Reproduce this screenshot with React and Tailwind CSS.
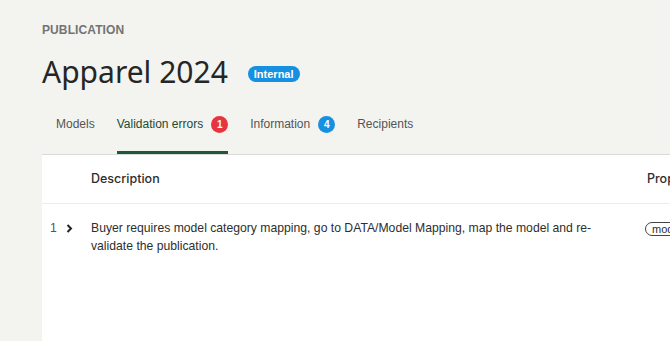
import React from "react";

export default function App() {
  return (
    <div className="h-[341px] w-[670px] overflow-hidden bg-[#f3f3ef] pl-[42px]" style={{ fontFamily: "'Liberation Sans', Arial, sans-serif" }}>
      <div className="pt-[23px] text-[12px] font-semibold uppercase leading-[14px] tracking-[0.1px] text-[#737373]">Publication</div>
      <div className="mt-[18px] flex items-center">
        <h1 className="text-[30px] leading-[34px] text-[#262626]" style={{ fontFamily: "'Noto Sans', sans-serif" }}>Apparel 2024</h1>
        <span className="ml-[20px] mt-[3px] rounded-full bg-[#1690e0] px-[6px] text-[11px] font-bold leading-[16px] text-white">Internal</span>
      </div>
      <div className="mt-[27px] w-[700px] border-b border-[#d9d9d6] pl-[14px]">
        <div className="flex gap-[22px] text-[12px] leading-[16px]">
          <div className="pb-[21px] text-[#555]">Models</div>
          <div className="flex items-start gap-[8px] border-b-[3px] border-[#1e5a3a] pb-[18px] text-[#1d4a33]">
            <span>Validation errors</span>
            <span className="flex h-[17px] w-[17px] items-center justify-center rounded-full bg-[#e8343f] text-[10px] font-bold text-white">1</span>
          </div>
          <div className="flex items-start gap-[8px] pb-[21px] text-[#555]">
            <span>Information</span>
            <span className="flex h-[17px] w-[17px] items-center justify-center rounded-full bg-[#1690e0] text-[10px] font-bold text-white">4</span>
          </div>
          <div className="pb-[21px] text-[#555]">Recipients</div>
        </div>
      </div>
      <div className="h-[200px] w-[700px] bg-white text-[12.2px] text-[#2e2e2e]">
        <div className="flex h-[49px] items-center border-b border-[#ececec] text-[12.5px] font-medium">
          <div className="w-[49px]" />
          <div className="w-[556px]" style={{ fontFamily: "Inter, sans-serif" }}>Description</div>
          <div style={{ fontFamily: "Inter, sans-serif" }}>Prop</div>
        </div>
        <div className="flex pt-[15px]">
          <div className="flex w-[49px] items-start pl-[8px] leading-[18px]">
            <span className="text-[#555]">1</span>
            <svg className="ml-[9px] mt-[5px]" width="7" height="9" viewBox="0 0 7 9"><path d="M1.5 1l3.5 3.5L1.5 8" fill="none" stroke="#222" strokeWidth="2" /></svg>
          </div>
          <div className="w-[510px] leading-[18px]">Buyer requires model category mapping, go to DATA/Model Mapping, map the model and re-validate the publication.</div>
          <div className="w-[44px]" />
          <div className="pt-[1px]">
            <span className="rounded-full border border-[#444] px-[6px] text-[11px] leading-[13px]">model</span>
          </div>
        </div>
      </div>
    </div>
  );
}
